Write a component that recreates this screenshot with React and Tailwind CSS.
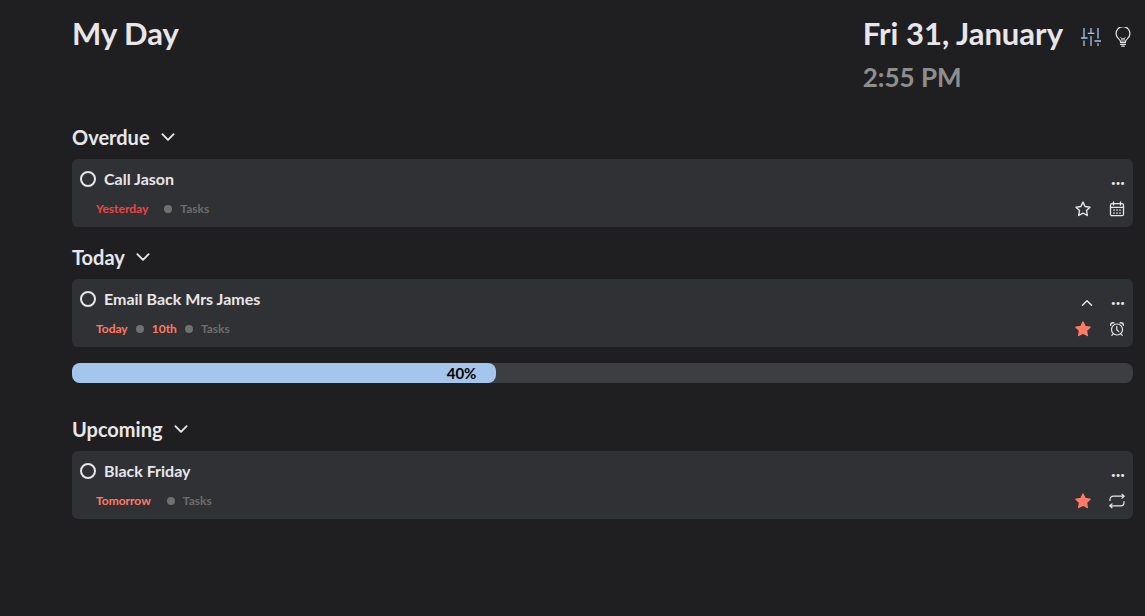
import React, { useState } from 'react';
import { IoChevronDown } from 'react-icons/io5';

function Icon({ size = 'size-4', box = 16, width = 1.3, fill = 'none', children }) {
  return (
    <svg viewBox={`0 0 ${box} ${box}`} className={size} fill={fill} stroke="currentColor" strokeWidth={width} strokeLinecap="round" strokeLinejoin="round" aria-hidden="true">
      {children}
    </svg>
  );
}

function SlidersIcon() {
  return (
    <svg viewBox="0 0 20 20" className="size-5" fill="none" stroke="currentColor" strokeWidth="1.3" aria-hidden="true">
      <path d="M3 1v10M0 11h6.500M3 13.500V19M10 1v5.500M6.700 6.300h6.600M10 9v10M17 1v10.500M13.500 14h6.500M17 16.300V19" />
    </svg>
  );
}

function BulbIcon() {
  return (
    <Icon size="size-5" box={20} width={1.2}>
      <path d="M7.500 14.800c0-1.300-.7-2-1.800-2.900a6.900 6.900 0 1 1 8.600 0c-1.100.9-1.800 1.600-1.800 2.900" />
      <path d="M9 15v-3.200L7.800 10.500M11 15v-3.200l1.200-1.300M9 11.800h2" strokeWidth="0.9" />
      <path d="M7.500 15.500h5M7.500 17.300h5M8.800 19.200h2.400" />
    </Icon>
  );
}

function CalendarIcon() {
  return (
    <Icon>
      <rect x="1.5" y="2.700" width="13" height="12" rx="1.500" />
      <path d="M1.500 6.300h13M4.500 1v3M11.500 1v3" />
      <path d="M5 9h.01M8 9h.01M11 9h.01M5 12h.01M8 12h.01M11 12h.01" strokeWidth="1.700" />
    </Icon>
  );
}

function AlarmIcon() {
  return (
    <Icon width={1.2}>
      <circle cx="8" cy="8.500" r="5.500" />
      <path d="M7.800 5.300v3.500l2 1.800M4.200 12.800l-1.400 1.500M11.800 12.800l1.400 1.500" />
      <path d="M1.700 4.200C1.500 2.500 3.200 1.300 4.800 1.900M14.300 4.200c.2-1.700-1.500-2.900-3.100-2.300" strokeWidth="1.500" />
    </Icon>
  );
}

function RepeatIcon() {
  return (
    <Icon width={1.2}>
      <path d="M1 7.500V6.500a3.300 3.300 0 0 1 3.300-3.300h10.500M13 1.300l2.200 1.900L13 5.100M15 8.500v1a3.300 3.300 0 0 1-3.300 3.300H1.200M3 10.900L.8 12.800 3 14.700" />
    </Icon>
  );
}

function StarIcon({ filled }) {
  return (
    <Icon width={1.4} fill={filled ? 'currentColor' : 'none'}>
      <path d="M8 1.100l2.100 4.400 4.900.7-3.500 3.400.8 4.900L8 12.200l-4.300 2.300.8-4.900L1 6.200l4.900-.7z" />
    </Icon>
  );
}

const markers = {
  calendar: { label: 'Due date', Icon: CalendarIcon },
  alarm: { label: 'Reminder', Icon: AlarmIcon },
  repeat: { label: 'Repeat', Icon: RepeatIcon },
};

function Dot() {
  return <span className="block size-2 rounded-full bg-[#707070]" />;
}

function Task({ title, due, dueColor, day, starred = false, marker, expandable }) {
  const [star, setStar] = useState(starred);
  const { label, Icon: Marker } = markers[marker];
  return (
    <article className="flex justify-between rounded-md bg-[#303134] px-2 pb-2">
      <div>
        <label className="flex h-10 items-center gap-2 font-bold">
          <input type="checkbox" className="size-4 appearance-none rounded-full border-2 border-[#e8e6e9] checked:bg-[#e8e6e9]" />
          {title}
        </label>
        <div className="flex h-5 items-center gap-2 pl-4 text-xs font-bold">
          <span className={dueColor}>{due}</span>
          {day ? (
            <>
              <Dot />
              <span className={dueColor}>{day}</span>
              <Dot />
            </>
          ) : (
            <span className="pl-2"><Dot /></span>
          )}
          <span className="text-[#6c6c6e]">Tasks</span>
        </div>
      </div>
      <div className="flex flex-col items-end">
        <div className="flex h-10 items-center gap-4 pt-2">
          {expandable && (
            <button aria-label="Collapse"><IoChevronDown className="size-4 rotate-180" /></button>
          )}
          <button aria-label="More options" className="text-[8px] leading-4">•••</button>
        </div>
        <div className="flex h-5 items-center gap-[18px]">
          <button aria-label="Important" onClick={() => setStar(!star)} className={star ? 'text-[#ff7b66]' : ''}>
            <StarIcon filled={star} />
          </button>
          <button aria-label={label}><Marker /></button>
        </div>
      </div>
    </article>
  );
}

function Section({ title, children }) {
  return (
    <section>
      <h2 className="text-xl font-bold">
        <button className="flex h-11 items-center gap-2">
          {title}
          <IoChevronDown className="size-5" />
        </button>
      </h2>
      {children}
    </section>
  );
}

export default function App() {
  const progress = 40;
  return (
    <main className="min-h-screen bg-[#1f1f21] pr-3 pl-[72px] font-['Lato',sans-serif] text-[#e8e6e9]">
      <header className="flex justify-between pt-[11px] pb-4">
        <h1 className="text-[31px] leading-11 font-bold">My Day</h1>
        <div className="flex gap-[18px]">
          <div className="font-bold">
            <p className="text-[31px] leading-11">Fri 31, January</p>
            <p className="text-[26px] leading-11 text-[#8e8e8e]">2:55 PM</p>
          </div>
          <div className="flex h-13 items-center gap-3">
            <button aria-label="Settings" className="text-[#a4c6ed]"><SlidersIcon /></button>
            <button aria-label="Suggestions"><BulbIcon /></button>
          </div>
        </div>
      </header>
      <Section title="Overdue">
        <Task title="Call Jason" due="Yesterday" dueColor="text-[#f04444]" marker="calendar" />
      </Section>
      <div className="pt-2 pb-6">
        <Section title="Today">
          <Task title="Email Back Mrs James" due="Today" dueColor="text-[#ff7b66]" day="10th" starred marker="alarm" expandable />
          <div role="progressbar" aria-label="Progress for today" aria-valuenow={progress} aria-valuemin={0} aria-valuemax={100} className="mt-4 rounded-lg bg-[#3d3e41]">
            <div className="rounded-lg bg-[#a4c6ed] pr-5 text-right text-[15px] leading-5 font-bold text-black" style={{ width: `${progress}%` }}>
              {progress}%
            </div>
          </div>
        </Section>
      </div>
      <Section title="Upcoming">
        <Task title="Black Friday" due="Tomorrow" dueColor="text-[#ff7b66]" starred marker="repeat" />
      </Section>
    </main>
  );
}
